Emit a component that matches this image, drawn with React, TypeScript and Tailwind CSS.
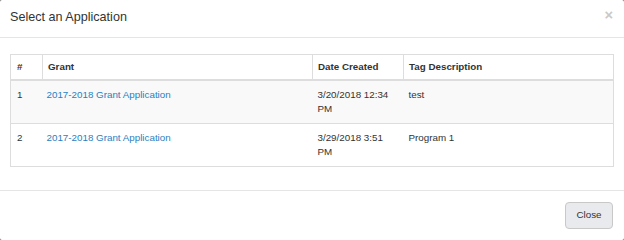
import React from "react";

const rows = [
  { n: "1", grant: "2017-2018 Grant Application", date: "3/20/2018 12:34 PM", tag: "test" },
  { n: "2", grant: "2017-2018 Grant Application", date: "3/29/2018 3:51 PM", tag: "Program 1" },
];

export default function App() {
  return (
    <div className="w-[624px] h-[240px] bg-[#6b6b6b]" style={{ fontFamily: '"Liberation Sans", Arial, sans-serif' }}>
      <div className="w-[624px] h-[240px] bg-white rounded-[2px] flex flex-col text-[#333]">
        <div className="h-[38px] border-b border-[#e5e5e5] flex items-start justify-between pl-[10px] pr-[11px]">
          <h4 className="text-[12.6px] leading-[18px] mt-[8px] text-[#333]">Select an Application</h4>
          <span className="text-[14.7px] leading-[15px] font-bold text-[#c9c9c9] mt-[8px]">×</span>
        </div>
        <div className="pt-[16px] pl-[10px] pr-[10px] pb-[23px]">
          <table className="w-full table-fixed border-collapse border border-[#ddd] text-[9.8px] leading-[14px]">
            <colgroup>
              <col className="w-[32px]" />
              <col className="w-[270px]" />
              <col className="w-[91px]" />
              <col />
            </colgroup>
            <thead>
              <tr className="border-b-2 border-[#ddd]">
                <th className="text-left font-bold border-r border-[#ddd] pl-[6px] pr-[5px] py-[5px]">#</th>
                <th className="text-left font-bold border-r border-[#ddd] pl-[5px] pr-[5px] py-[5px]">Grant</th>
                <th className="text-left font-bold border-r border-[#ddd] pl-[5px] pr-[5px] py-[5px]">Date Created</th>
                <th className="text-left font-bold pl-[5px] pr-[5px] py-[5px]">Tag Description</th>
              </tr>
            </thead>
            <tbody>
              {rows.map((r, i) => (
                <tr key={r.n} className={`border-t border-[#ddd] ${i === 0 ? "bg-[#f9f9f9]" : "bg-white"}`}>
                  <td className="align-top pl-[6px] pr-[5px] pt-[7px] pb-[7px]">{r.n}</td>
                  <td className="align-top pl-[4px] pr-[5px] pt-[7px] pb-[7px]">
                    <a className="text-[#2a7fc2]" href="#">{r.grant}</a>
                  </td>
                  <td className="align-top pl-[5px] pr-[5px] pt-[7px] pb-[7px]">{r.date}</td>
                  <td className="align-top pl-[5px] pr-[5px] pt-[7px] pb-[7px]">{r.tag}</td>
                </tr>
              ))}
            </tbody>
          </table>
        </div>
        <div className="border-t border-[#e5e5e5] flex justify-end pt-[11px] pr-[11px]">
          <button className="w-[48px] h-[27px] rounded-[4px] border border-[#c8c8c8] bg-[#e8eaed] text-[9.8px] text-[#333]">
            Close
          </button>
        </div>
      </div>
    </div>
  );
}
